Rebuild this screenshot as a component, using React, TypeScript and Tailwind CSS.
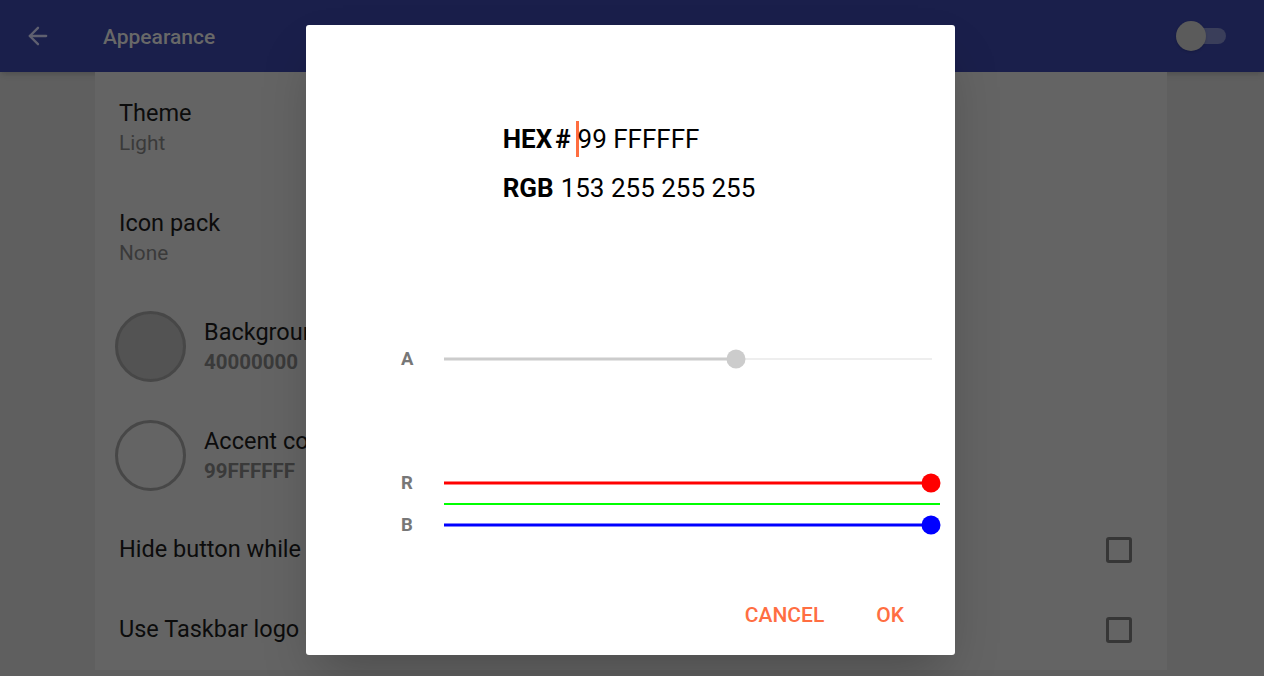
import { ArrowLeft } from "lucide-react";

const font = { fontFamily: "Roboto, 'Liberation Sans', sans-serif" };

function Slider({
  label,
  value,
  color,
  rest,
  restEnd = 496,
  thumb = true,
  thick = 3,
}: {
  label: string;
  value: number;
  color: string;
  rest: string;
  restEnd?: number;
  thumb?: boolean;
  thick?: number;
}) {
  const pct = (value / 255) * 487;
  return (
    <div className="flex h-[21px] items-center">
      <div className="w-[138px] pl-[95px] pt-[2px] text-[18.5px] font-bold text-[#777777]">{label}</div>
      <div className="relative h-[21px] w-[496px]">
        <div
          className="absolute left-0 top-1/2 -translate-y-1/2"
          style={{ width: pct, height: thick, background: color }}
        />
        <div
          className="absolute top-1/2 -translate-y-1/2"
          style={{ left: pct, width: Math.max(restEnd - pct, 0), height: 2, background: rest }}
        />
        {thumb && (
          <div
            className="absolute top-1/2 h-[19px] w-[19px] -translate-x-1/2 -translate-y-1/2 rounded-full"
            style={{ left: pct, background: color }}
          />
        )}
      </div>
    </div>
  );
}

function Row({ title, sub, h }: { title: string; sub?: string; h: string }) {
  return (
    <div className={`flex flex-col justify-center pl-6 ${h}`}>
      <div className="text-[23.5px] leading-[30px] text-[#0c0c0c]">{title}</div>
      {sub && <div className="text-[20.8px] leading-[30px] text-[#3a3a3a]">{sub}</div>}
    </div>
  );
}

function ColorRow({ title, code, fill }: { title: string; code: string; fill: boolean }) {
  return (
    <div className="flex h-[109px] items-center pl-5">
      <div
        className={`h-[71px] w-[71px] rounded-full border-[3px] border-[#474747] ${
          fill ? "bg-[#535353]" : "bg-transparent"
        }`}
      />
      <div className="ml-[18px] flex flex-col">
        <div className="text-[23.5px] leading-[30px] text-[#0c0c0c]">{title}</div>
        <div className="text-[20.5px] font-bold leading-[30px] text-[#3a3a3a]">{code}</div>
      </div>
    </div>
  );
}

function CheckRow({ title }: { title: string }) {
  return (
    <div className="flex h-[80px] items-center justify-between pl-6 pr-[35px]">
      <div className="text-[23.5px] text-[#0c0c0c]">{title}</div>
      <div className="h-[26px] w-[26px] rounded-[3px] border-[3px] border-[#363636]" />
    </div>
  );
}

export default function App() {
  return (
    <div className="relative h-[676px] w-[1264px] overflow-hidden bg-[#5f5f5f]" style={font}>
      <div className="flex h-[72px] items-center bg-[#1a1f4b] shadow-md">
        <ArrowLeft className="ml-[24px] h-[28px] w-[28px] text-[#5f6070]" strokeWidth={2} />
        <div className="ml-[51px] pt-[4px] text-[21px] font-medium text-[#686868]">Appearance</div>
        <div className="relative ml-auto mr-[38px] h-[16px] w-[46px] rounded-full bg-[#3a3e5a]">
          <div className="absolute left-[-4px] top-1/2 h-[30px] w-[30px] -translate-y-1/2 rounded-full bg-[#5b5b5b] shadow" />
        </div>
      </div>

      <div className="mx-[95px] flex w-[1072px] flex-col bg-[#646464]">
        <Row title="Theme" sub="Light" h="h-[111px]" />
        <Row title="Icon pack" sub="None" h="h-[109px]" />
        <ColorRow title="Background tint" code="40000000" fill />
        <ColorRow title="Accent color" code="99FFFFFF" fill={false} />
        <CheckRow title="Hide button while docked" />
        <CheckRow title="Use Taskbar logo as start button" />
      </div>

      <div className="absolute left-[306px] top-[25px] flex h-[630px] w-[649px] flex-col rounded-[3px] bg-white shadow-2xl">
        <div className="flex justify-center pr-[3px] pt-[97px]">
          <div className="flex flex-col text-[26px] text-black">
            <div className="flex h-[34px] items-center">
              <span className="font-bold">HEX</span>
              <span className="ml-[3px] font-bold">#</span>
              <span className="ml-[5px] h-[36px] w-[3px] bg-[#ff6e40]" />
              <span className="-ml-[1px]">99 FFFFFF</span>
            </div>
            <div className="mt-[15px] flex h-[34px] items-center">
              <span className="font-bold">RGB</span>
              <span className="ml-[7px]">153 255 255 255</span>
            </div>
          </div>
        </div>

        <div className="mt-[143px]">
          <Slider label="A" value={153} color="#cccccc" rest="#eeeeee" restEnd={488} />
        </div>

        <div className="mt-[103px] flex flex-col">
          <Slider label="R" value={255} color="#ff0000" rest="#ff0000" />
          <Slider label="" value={255} color="#00ff00" rest="#00ff00" thumb={false} thick={2} />
          <Slider label="B" value={255} color="#0000ff" rest="#0000ff" />
        </div>

        <div className="mt-auto flex justify-end gap-[52px] pb-[24px] pr-[51px] text-[21px] font-medium text-[#ff6e42]">
          <div>CANCEL</div>
          <div>OK</div>
        </div>
      </div>
    </div>
  );
}
